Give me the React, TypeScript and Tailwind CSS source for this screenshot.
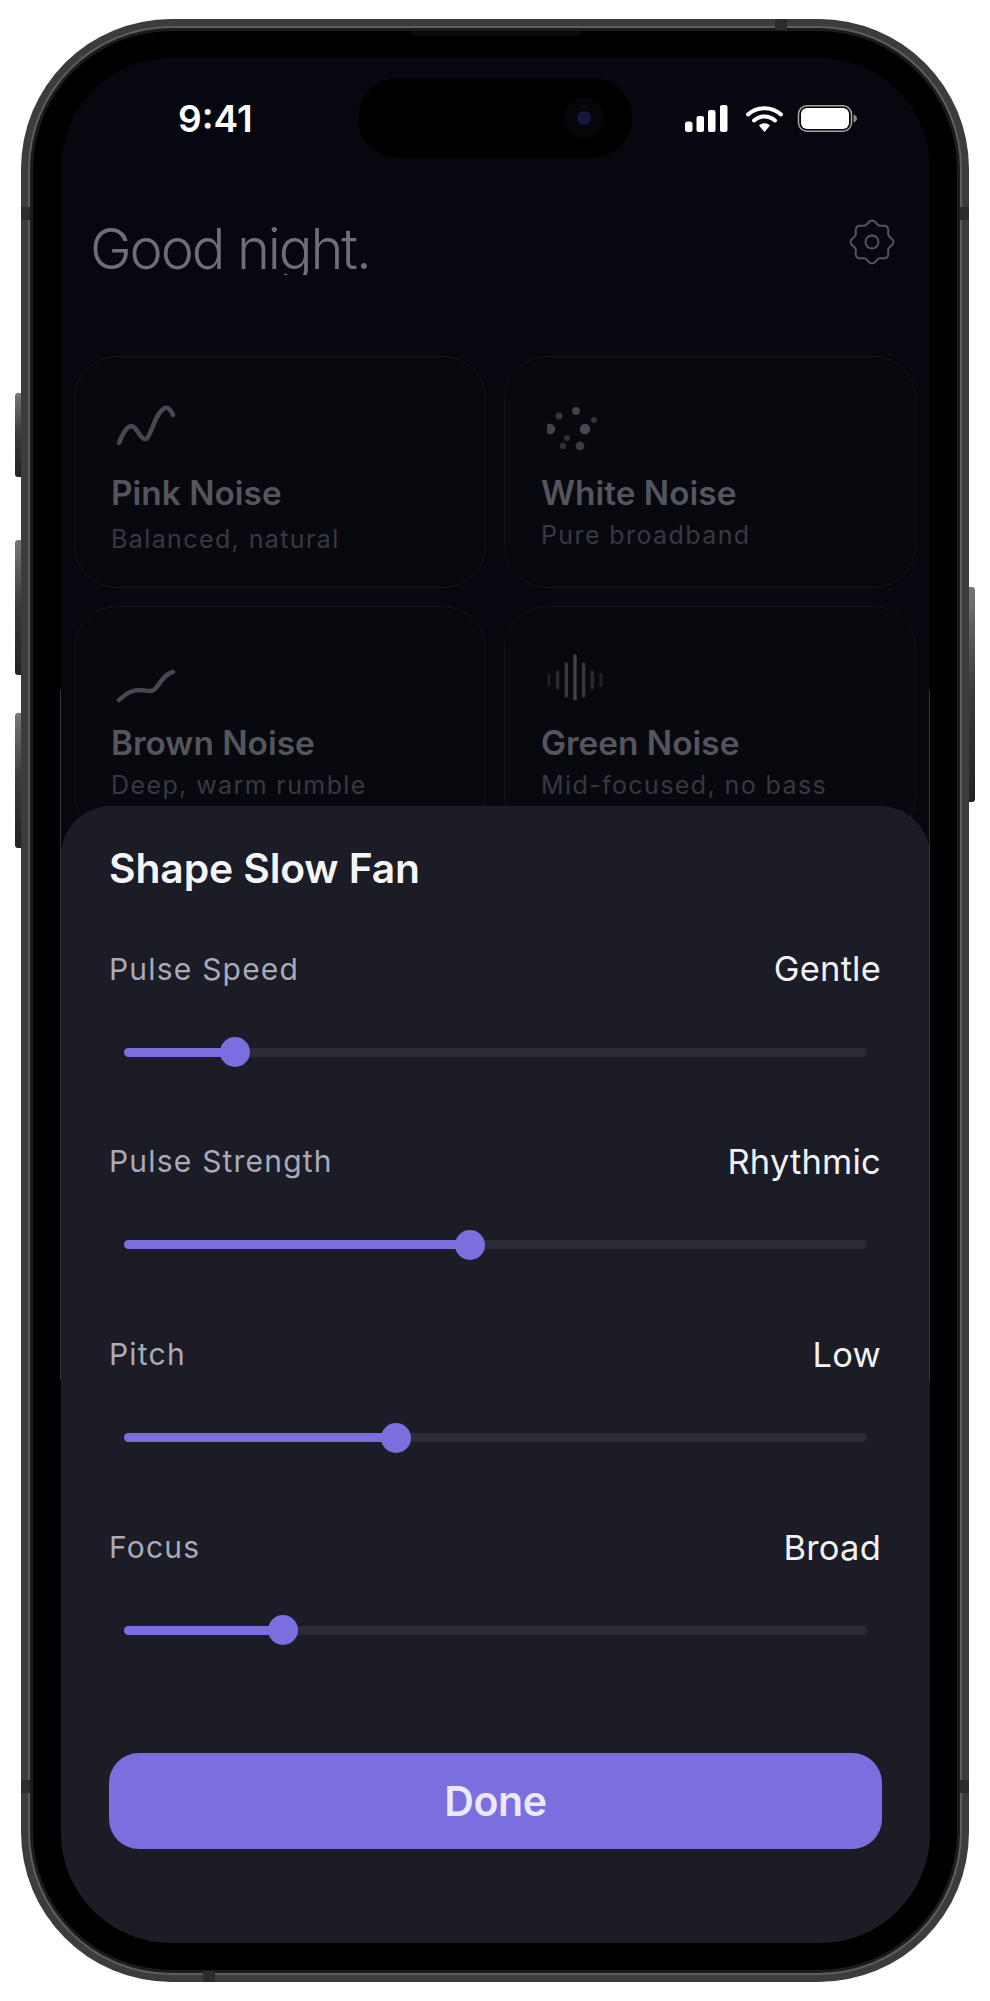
const FONT = "font-['Inter','Noto_Sans',sans-serif]";

const SLIDERS = [
  { label: 'Pulse Speed', value: 'Gentle', pct: 15 },
  { label: 'Pulse Strength', value: 'Rhythmic', pct: 46.6 },
  { label: 'Pitch', value: 'Low', pct: 36.6 },
  { label: 'Focus', value: 'Broad', pct: 21.4 },
];

// scalloped outline for the settings icon
function gearPath() {
  const pts: string[] = [];
  for (let i = 0; i < 96; i++) {
    const a = (i / 96) * Math.PI * 2;
    const r = 19.6 + 1.8 * Math.cos(8 * a);
    const x = 24 + r * Math.sin(a);
    const y = 24 - r * Math.cos(a);
    pts.push(`${i === 0 ? 'M' : 'L'}${x.toFixed(2)} ${y.toFixed(2)}`);
  }
  return pts.join(' ') + ' Z';
}

function Wave({ d }: { d: string }) {
  return (
    <svg className="overflow-visible" width="64" height="48" viewBox="0 0 64 48" fill="none">
      <path d={d} stroke="#484852" strokeWidth="4.5" strokeLinecap="round" strokeLinejoin="round" />
    </svg>
  );
}

function Dots() {
  const dots = [
    [18, 9, 4, '#42424c'],
    [1, 14, 3.4, '#33333c'],
    [36, 18, 3, '#33333c'],
    [-8, 27, 5.2, '#42424c'],
    [27, 27, 5.2, '#484852'],
    [9, 36, 3, '#2f2f38'],
    [5, 44, 3.2, '#2f2f38'],
    [22, 44, 4.4, '#3c3c46'],
  ] as const;
  return (
    <svg width="64" height="48" viewBox="-11 0 64 48">
      {dots.map(([cx, cy, r, fill], i) => (
        <circle key={i} cx={cx} cy={cy} r={r} fill={fill} />
      ))}
    </svg>
  );
}

function Bars() {
  const bars = [
    [0, 5, '#1e1e26'],
    [8.6, 8, '#2a2a33'],
    [17.3, 16, '#373741'],
    [26, 24, '#42424c'],
    [34.6, 16, '#373741'],
    [43.3, 8, '#2a2a33'],
    [52, 5, '#1e1e26'],
  ] as const;
  return (
    <svg width="64" height="48" viewBox="-2 -2 64 48" fill="none">
      {bars.map(([x, h, c], i) => (
        <line key={i} x1={x} x2={x} y1={26 - h} y2={26 + h} stroke={c} strokeWidth="3.4" strokeLinecap="round" />
      ))}
    </svg>
  );
}

function NoiseCard({ icon, title, sub, subGap }: { icon: React.ReactNode; title: string; sub: string; subGap: string }) {
  return (
    <div className="h-[232px] rounded-[42px] border border-[#15161c] bg-[#08080f] pl-[36px] pt-[45px]">
      <div className="ml-[6px] h-[48px]">{icon}</div>
      <div className="mt-[25px] text-[33.4px] leading-[36px] font-semibold text-[#55555e]">{title}</div>
      <div className={`${subGap} text-[25px] leading-[30px] tracking-[1.4px] text-[#383843]`}>{sub}</div>
    </div>
  );
}

function Slider({ label, value, pct }: { label: string; value: string; pct: number }) {
  return (
    <div>
      <div className="flex h-[36px] items-center justify-between pr-[1px]">
        <span className="text-[30px] tracking-[1.2px] text-[#aaaab8]">{label}</span>
        <span className="text-[34.5px] tracking-[0.2px] text-[#f2f2f6]">{value}</span>
      </div>
      <div className="mt-[50px] flex h-[30px] items-center px-[15px]">
        <div className="relative h-[9px] w-full rounded-full bg-[#2b2c37]">
          <div className="h-full rounded-full bg-[#7b6fe0]" style={{ width: `${pct}%` }} />
          <div
            className="absolute top-1/2 h-[30px] w-[30px] -translate-x-1/2 -translate-y-1/2 rounded-full bg-[#7b6fe0]"
            style={{ left: `${pct}%` }}
          />
        </div>
      </div>
    </div>
  );
}

export default function App() {
  return (
    <div className={`h-[2001px] w-[990px] bg-white pl-[21px] pt-[19px] ${FONT}`}>
      <div className="relative h-[1963px] w-[948px]">
        {/* side buttons */}
        <div className="absolute -left-[6px] top-[374px] h-[84px] w-[8px] rounded-l-[3px] bg-gradient-to-b from-[#777] via-[#3a3a3a] to-[#222]" />
        <div className="absolute -left-[6px] top-[521px] h-[135px] w-[8px] rounded-l-[3px] bg-gradient-to-b from-[#777] via-[#3a3a3a] to-[#222]" />
        <div className="absolute -left-[6px] top-[694px] h-[135px] w-[8px] rounded-l-[3px] bg-gradient-to-b from-[#777] via-[#3a3a3a] to-[#222]" />
        <div className="absolute -right-[6px] top-[568px] h-[215px] w-[8px] rounded-r-[3px] bg-gradient-to-b from-[#777] via-[#3a3a3a] to-[#222]" />

        {/* frame */}
        <div className="relative h-full rounded-[150px] bg-[#3c3c3c] p-[7px]">
          <div className="h-full rounded-[143px] bg-[#5e5e5e] p-[2px]">
            <div className="h-full rounded-[141px] bg-[#1c1c1c] p-[3px]">
              <div className="h-full rounded-[138px] bg-black pb-[27px] pl-[28px] pr-[27px] pt-[27px]">
                {/* screen */}
                <div className="relative h-[1885px] overflow-hidden rounded-[110px] bg-[#07070f]">
                  <div className="flex h-[120px] items-center pl-[117px]">
                    <span className="w-[76px] text-[37px] font-semibold leading-none text-white">9:41</span>
                    <div className="ml-[104px] flex h-[80px] w-[274px] items-center justify-end rounded-[40px] bg-black pr-[28px]">
                      <div className="flex h-[40px] w-[40px] items-center justify-center rounded-full bg-[#06060a]">
                        <div className="h-[14px] w-[14px] rounded-full bg-[#16163e]" />
                      </div>
                    </div>
                    <svg className="ml-[53px]" width="172" height="27" viewBox="0 0 172 27" fill="none">
                      <rect x="0" y="16.5" width="7.5" height="10.5" rx="2.5" fill="#fff" />
                      <rect x="11.5" y="11" width="7.5" height="16" rx="2" fill="#fff" />
                      <rect x="23" y="5" width="7.5" height="22" rx="2" fill="#fff" />
                      <rect x="35" y="0" width="7.5" height="27" rx="2" fill="#fff" />
                      <path d="M63 9.5 C72 1 87 1 96 9.5" stroke="#fff" strokeWidth="4" strokeLinecap="round" />
                      <path d="M69 15.5 C75 10 84 10 90 15.5" stroke="#fff" strokeWidth="4" strokeLinecap="round" />
                      <path d="M74 20.5 C77 17.5 82 17.5 85 20.5 L79.5 27 Z" fill="#fff" />
                      <rect x="113.5" y="0.75" width="53" height="25.5" rx="8.5" stroke="#a8a8a8" strokeWidth="1.5" />
                      <rect x="116" y="3" width="48" height="21" rx="6" fill="#fff" />
                      <path d="M168.5 9.5 C171 10.5 172 12 172 13.5 C172 15 171 16.5 168.5 17.5 Z" fill="#8a8a8a" />
                    </svg>
                  </div>

                  <div className="flex h-[178px] items-start justify-between pl-[29px] pr-[34px] pt-[39px]">
                    <div className="h-[58px] overflow-hidden text-[56px] font-light leading-[64px] tracking-[-2.1px] text-[#6e6e77]">
                      Good night.
                    </div>
                    <svg className="mt-[1px]" width="48" height="48" viewBox="0 0 48 48" fill="none">
                      <path d={gearPath()} stroke="#55555e" strokeWidth="2" strokeLinejoin="round" />
                      <circle cx="24" cy="24" r="6.5" stroke="#55555e" strokeWidth="2" />
                    </svg>
                  </div>

                  <div className="grid grid-cols-2 gap-[18px] pl-[13px] pr-[14px]">
                    <NoiseCard
                      icon={<Wave d="M2 41 C8 26 13 21 18 26 C22 31 25 38 29 37 C34 35 38 10 48 6 C52 5 55 10 56 13" />}
                      title="Pink Noise"
                      sub="Balanced, natural"
                      subGap="mt-[13px]"
                    />
                    <NoiseCard icon={<Dots />} title="White Noise" sub="Pure broadband" subGap="mt-[9px]" />
                    <NoiseCard
                      icon={<Wave d="M2 48 C10 41 15 38 22 38 C30 38 34 41 38 37 C43 32 47 22 56 20" />}
                      title="Brown Noise"
                      sub="Deep, warm rumble"
                      subGap="mt-[9px]"
                    />
                    <NoiseCard icon={<Bars />} title="Green Noise" sub="Mid-focused, no bass" subGap="mt-[9px]" />
                  </div>

                  {/* bottom sheet */}
                  <div className="absolute inset-x-0 bottom-0 flex h-[1137px] flex-col rounded-t-[50px] bg-[#1b1c25] px-[48px]">
                    <h2 className="mt-[38px] text-[40.8px] font-semibold leading-[48px] tracking-[-0.1px] text-[#f5f5f8]">Shape Slow Fan</h2>
                    <div className="mt-[59px] flex flex-col gap-[76.8px]">
                      {SLIDERS.map((s) => (
                        <Slider key={s.label} {...s} />
                      ))}
                    </div>
                    <button className="mt-auto mb-[94px] h-[96px] rounded-[30px] bg-[#7b6fe0] pt-[1px] text-[41px] font-semibold tracking-[-0.4px] text-[#ece9ff]">
                      Done
                    </button>
                  </div>
                </div>
              </div>
            </div>
          </div>
        </div>

        {/* speaker slit and antenna bands */}
        <div className="absolute left-[389px] top-[12px] h-[5px] w-[172px] rounded-b-[4px] bg-[#0a0a0a]" />
        <div className="absolute left-[754px] top-0 h-[11px] w-[12px] bg-[#2c2c2c]" />
        <div className="absolute bottom-0 left-[182px] h-[11px] w-[12px] bg-[#2c2c2c]" />
        <div className="absolute left-0 top-[188px] h-[13px] w-[9px] bg-[#2c2c2c]" />
        <div className="absolute left-0 top-[1761px] h-[13px] w-[9px] bg-[#2c2c2c]" />
        <div className="absolute right-0 top-[188px] h-[13px] w-[9px] bg-[#2c2c2c]" />
        <div className="absolute right-0 top-[1761px] h-[13px] w-[9px] bg-[#2c2c2c]" />

        {/* faint edge lines beside the screen */}
        <div className="absolute left-[39px] top-[671px] h-[690px] w-px bg-[#33343c]" />
        <div className="absolute right-[39px] top-[671px] h-[690px] w-px bg-[#33343c]" />
      </div>
    </div>
  );
}
